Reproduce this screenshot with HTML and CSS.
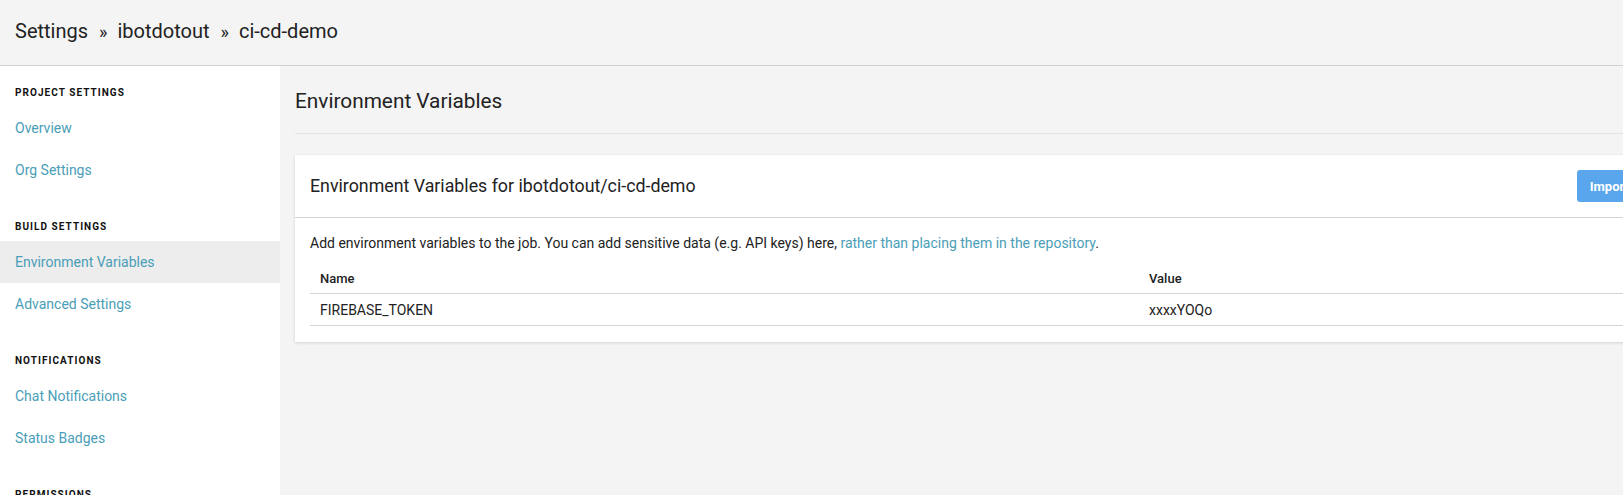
FILE: index.html
```html
<!DOCTYPE html>
<html lang="en">
<head>
<meta charset="utf-8">
<title>Settings - ci-cd-demo</title>
<link rel="stylesheet" href="styles.css">
</head>
<body>
<div class="app">
  <header class="topbar">
    <h1 class="crumbs">Settings<span class="sep">»</span>ibotdotout<span class="sep">»</span>ci-cd-demo</h1>
  </header>
  <div class="layout">
    <nav class="sidebar">
      <div class="nav-group">
        <div class="nav-heading">Project Settings</div>
        <a class="nav-link" href="#">Overview</a>
        <a class="nav-link" href="#">Org Settings</a>
      </div>
      <div class="nav-group">
        <div class="nav-heading">Build Settings</div>
        <a class="nav-link active" href="#">Environment Variables</a>
        <a class="nav-link" href="#">Advanced Settings</a>
      </div>
      <div class="nav-group">
        <div class="nav-heading">Notifications</div>
        <a class="nav-link" href="#">Chat Notifications</a>
        <a class="nav-link" href="#">Status Badges</a>
      </div>
      <div class="nav-group">
        <div class="nav-heading">Permissions</div>
      </div>
    </nav>
    <main class="content">
      <h2 class="page-title">Environment Variables</h2>
      <section class="card">
        <div class="card-header">
          <h3 class="card-title">Environment Variables for ibotdotout/ci-cd-demo</h3>
          <button class="btn">Import Variables</button>
        </div>
        <div class="card-body">
          <p class="desc">Add environment variables to the job. You can add sensitive data (e.g. API keys) here, <a href="#">rather than placing them in the repository</a>.</p>
          <table class="vars">
            <thead>
              <tr><th class="col-name">Name</th><th>Value</th></tr>
            </thead>
            <tbody>
              <tr><td>FIREBASE_TOKEN</td><td>xxxxYOQo</td></tr>
            </tbody>
          </table>
        </div>
      </section>
    </main>
  </div>
</div>
</body>
</html>
```
FILE: styles.css
```css
html, body {
  margin: 0;
  padding: 0;
  overflow: hidden;
  background: #f4f4f4;
}
body {
  font-family: Roboto, "Noto Sans", "Liberation Sans", sans-serif;
  color: #333;
  width: 1623px;
  height: 495px;
}
.app {
  display: flex;
  flex-direction: column;
  height: 495px;
}
.topbar {
  height: 66px;
  box-sizing: border-box;
  background: #f4f4f4;
  border-bottom: 1px solid #cfcfcf;
  padding: 20px 15px 0;
  flex: none;
}
.crumbs {
  margin: 0;
  font-size: 20px;
  line-height: 22px;
  font-weight: 400;
  color: #222;
}
.crumbs .sep {
  margin: 0 10px 0 11px;
  font-size: 18px;
}
.layout {
  display: flex;
  flex: 1;
  min-height: 0;
}
.sidebar {
  width: 280px;
  flex: none;
  background: #fff;
  padding-top: 19px;
  box-sizing: border-box;
}
.nav-group {
  display: flex;
  flex-direction: column;
  margin-bottom: 28px;
}
.nav-heading {
  font-size: 10px;
  line-height: 16px;
  font-weight: 700;
  letter-spacing: 1.05px;
  text-transform: uppercase;
  color: #111;
  padding: 0 15px;
  margin-bottom: 6px;
}
.nav-link {
  display: block;
  height: 42px;
  line-height: 42px;
  padding: 0 15px;
  font-size: 14px;
  color: #4a9eb7;
  text-decoration: none;
}
.nav-link.active {
  background: #ededed;
}
.content {
  flex: none;
  width: 1420px;
  padding: 23px 0 0 15px;
}
.page-title {
  margin: 0;
  font-size: 20.8px;
  line-height: 24px;
  font-weight: 400;
  color: #222;
  padding-bottom: 20px;
  border-bottom: 1px solid #e3e3e3;
  margin-bottom: 21px;
}
.card {
  background: #fff;
  box-shadow: 0 1px 3px rgba(0, 0, 0, 0.14);
}
.card-header {
  display: flex;
  align-items: center;
  justify-content: space-between;
  padding: 15px;
  border-bottom: 1px solid #d4d4d4;
}
.card-title {
  margin: 0;
  font-size: 17.8px;
  line-height: 32px;
  font-weight: 400;
  color: #222;
}
.btn {
  height: 32px;
  padding: 0 13px;
  border: none;
  border-radius: 3px;
  background: #5aa6ec;
  color: #fff;
  font-family: inherit;
  font-size: 13px;
  font-weight: 700;
}
.card-body {
  padding: 15px 15px 16px;
}
.desc {
  margin: 0 0 10px;
  font-size: 14px;
  line-height: 20px;
  color: #222;
}
.desc a {
  color: #4a9eb7;
  text-decoration: none;
}
.vars {
  width: 100%;
  border-collapse: collapse;
}
.vars th, .vars td {
  text-align: left;
  padding: 0 10px;
  color: #222;
}
.vars th {
  height: 30px;
  font-size: 13px;
  font-weight: 500;
  border-bottom: 1px solid #d4d4d4;
}
.vars td {
  height: 31px;
  font-size: 14px;
  font-weight: 400;
  border-bottom: 1px solid #d4d4d4;
}
.vars .col-name {
  width: 809px;
}
```
